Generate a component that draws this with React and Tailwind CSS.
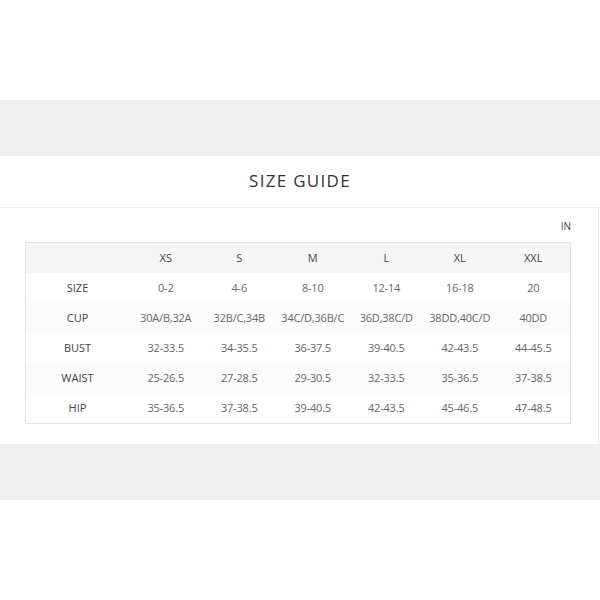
import React from 'react';

const sizes = ['XS', 'S', 'M', 'L', 'XL', 'XXL'];

const rows = [
    ['SIZE', ['0-2', '4-6', '8-10', '12-14', '16-18', '20']],
    ['CUP', ['30A/B,32A', '32B/C,34B', '34C/D,36B/C', '36D,38C/D', '38DD,40C/D', '40DD']],
    ['BUST', ['32-33.5', '34-35.5', '36-37.5', '39-40.5', '42-43.5', '44-45.5']],
    ['WAIST', ['25-26.5', '27-28.5', '29-30.5', '32-33.5', '35-36.5', '37-38.5']],
    ['HIP', ['35-36.5', '37-38.5', '39-40.5', '42-43.5', '45-46.5', '47-48.5']],
];

const App = () => {
    return (
        <div className="w-[600px] h-[600px] bg-white" style={{ fontFamily: '"Open Sans", "Liberation Sans", sans-serif' }}>
            <div className="h-[100px]" />
            <div className="h-[56px] bg-[#f0f0f0]" />

            {/* header */}
            <div className="h-[52px] flex items-center justify-center border-b border-[#f0f0f0]">
                <h2 className="text-[17px] tracking-[1.3px] text-[#333] pb-[2px]">SIZE GUIDE</h2>
            </div>

            {/* table panel */}
            <div className="w-[599px] h-[236px] border-r border-[#ececec] pt-[11px]">
                <div className="flex justify-end pr-[27px] h-[23px]">
                    <span className="text-[10px] text-[#444]">IN</span>
                </div>
                <div className="ml-[25px] w-[546px] border border-[#e2e2e2]">
                    <div className="grid grid-cols-[103px_repeat(6,1fr)] h-[30px] bg-[#f6f6f6] items-center text-[11px] text-[#444]">
                        <span />
                        {sizes.map((s) => (
                            <span key={s} className="text-center">{s}</span>
                        ))}
                    </div>
                    {rows.map(([label, vals], i) => (
                        <div
                            key={label}
                            className={`grid grid-cols-[103px_repeat(6,1fr)] h-[30px] items-center text-[11px] ${i % 2 === 1 ? 'bg-[#fbfbfb]' : 'bg-white'}`}
                        >
                            <span className="text-center text-[#444]">{label}</span>
                            {vals.map((v, j) => (
                                <span key={j} className="text-center text-[#666] tracking-[-0.2px]">{v}</span>
                            ))}
                        </div>
                    ))}
                </div>
            </div>

            <div className="h-[56px] bg-[#f0f0f0]" />
        </div>
    );
};

export default App;
